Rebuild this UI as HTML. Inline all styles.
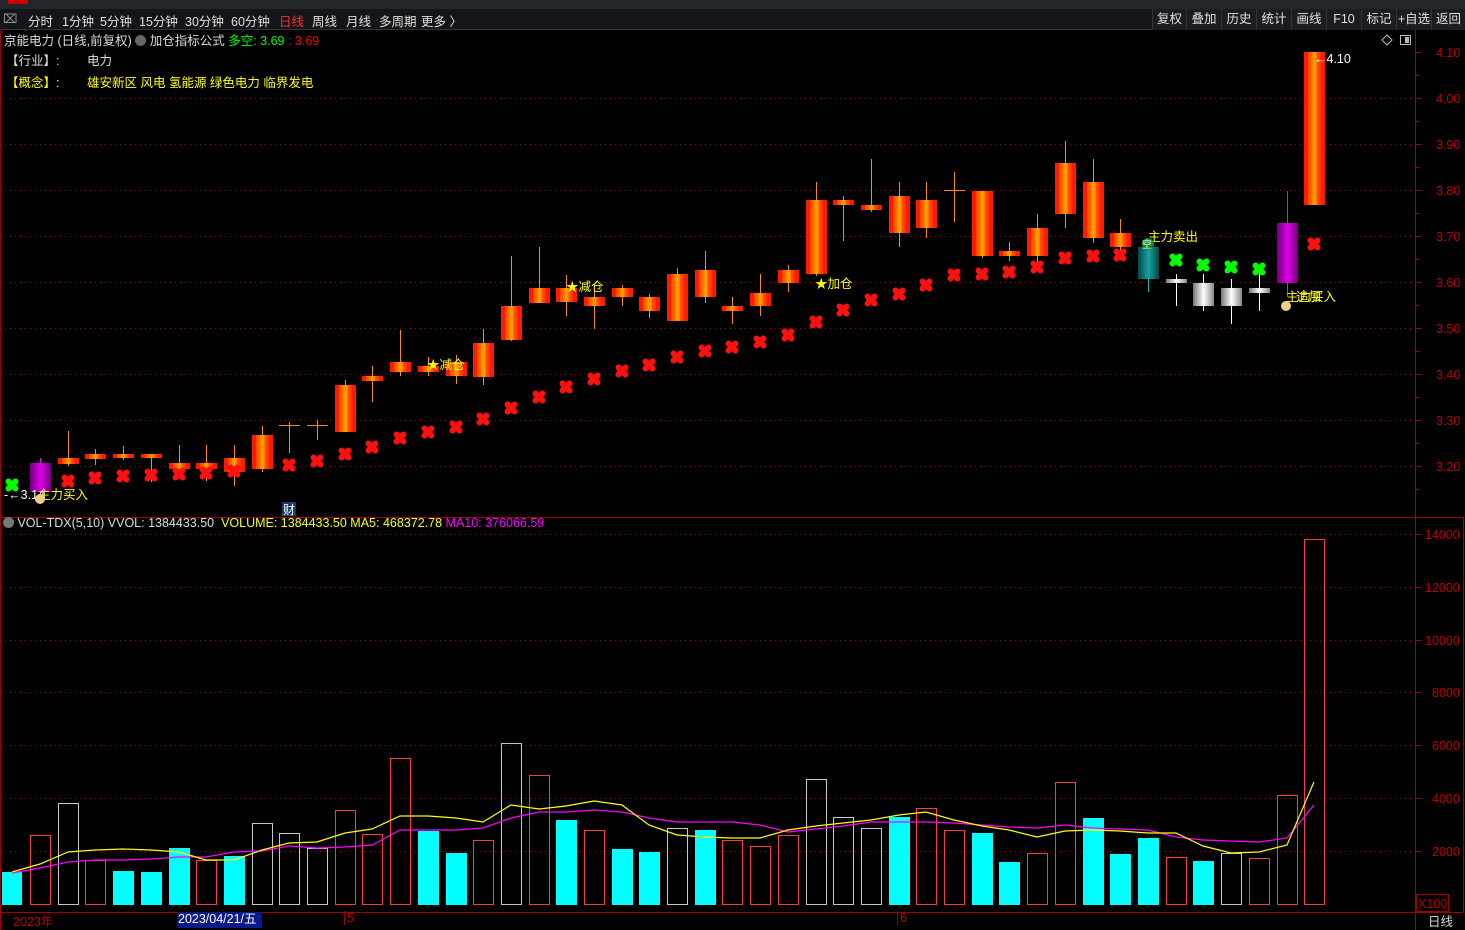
<!DOCTYPE html>
<html><head><meta charset="utf-8"><style>
*{margin:0;padding:0;box-sizing:border-box}
body{width:1465px;height:930px;background:#000;overflow:hidden;font-family:"Liberation Sans","Noto Sans CJK SC",sans-serif;font-size:12px;color:#ddd;position:relative}
.a{position:absolute;white-space:nowrap}
#top{position:absolute;left:0;top:0;width:1465px;height:9px;background:#23262b}
#top .r{position:absolute;left:8px;top:0;width:20px;height:4px;background:#c00}
#tabs{position:absolute;left:0;top:9px;width:1465px;height:21px;background:#141518;border-bottom:1px solid #333}
#tabs span{position:absolute;top:2px;font-size:12.5px;color:#e0e0e0}
.btn{position:absolute;top:9px;height:21px;background:#1c1d21;border-left:1px solid #333;font-size:12.5px;color:#e0e0e0;text-align:center;line-height:20px}
</style></head><body>
<div id="top"><div class="r"></div></div>
<div id="tabs">
<span style="left:3px;color:#999">⌧</span>
<span style="left:28px">分时</span><span style="left:62px">1分钟</span><span style="left:100px">5分钟</span><span style="left:139px">15分钟</span><span style="left:185px">30分钟</span><span style="left:231px">60分钟</span><span style="left:279px;color:#f33">日线</span><span style="left:312px">周线</span><span style="left:346px">月线</span><span style="left:379px">多周期</span><span style="left:421px">更多 〉</span>
</div>
<div class="btn" style="left:1152px;width:34px">复权</div><div class="btn" style="left:1186px;width:35px">叠加</div><div class="btn" style="left:1221px;width:35px">历史</div><div class="btn" style="left:1256px;width:35px">统计</div><div class="btn" style="left:1291px;width:35px">画线</div><div class="btn" style="left:1326px;width:35px">F10</div><div class="btn" style="left:1361px;width:35px">标记</div><div class="btn" style="left:1396px;width:35px">+自选</div><div class="btn" style="left:1431px;width:34px">返回</div>

<svg class="a" style="left:0;top:0" width="1465" height="930" id="s">
<defs>
<linearGradient id="gr" x1="0" x2="1"><stop offset="0" stop-color="#ff1a00"/><stop offset=".2" stop-color="#ff1a00"/><stop offset=".2" stop-color="#ff4a00"/><stop offset=".4" stop-color="#ff7000"/><stop offset=".4" stop-color="#ff9a00"/><stop offset=".6" stop-color="#ff9a00"/><stop offset=".6" stop-color="#ff5a00"/><stop offset=".8" stop-color="#ff3000"/><stop offset=".8" stop-color="#ff1a00"/><stop offset="1" stop-color="#ff1a00"/></linearGradient>
<linearGradient id="gp" x1="0" x2="1"><stop offset="0" stop-color="#70007a"/><stop offset=".5" stop-color="#e000e8"/><stop offset="1" stop-color="#70007a"/></linearGradient>
<linearGradient id="gw" x1="0" x2="1"><stop offset="0" stop-color="#777"/><stop offset=".5" stop-color="#fff"/><stop offset="1" stop-color="#888"/></linearGradient>
<linearGradient id="gt" x1="0" x2="1"><stop offset="0" stop-color="#004848"/><stop offset=".5" stop-color="#1aa0a0"/><stop offset="1" stop-color="#004848"/></linearGradient>
</defs>
<g id="grid" stroke="#a00000" stroke-dasharray="1,4" stroke-width="1"></g>
<line x1="0" y1="517.5" x2="1463" y2="517.5" stroke="#a00000"/>
<line x1="1415.5" y1="30" x2="1415.5" y2="930" stroke="#a00000"/>
<line x1="0" y1="912.5" x2="1463" y2="912.5" stroke="#a00000"/>
<line x1="1463.5" y1="517" x2="1463.5" y2="912" stroke="#a00000"/>
<line x1="0.5" y1="30" x2="0.5" y2="930" stroke="#a00000"/>
<g id="g"></g>
<g font-size="12.5" fill="#c00000" id="ax"></g>
<rect x="1416.5" y="894.5" width="32" height="17" fill="none" stroke="#a00000"/>
<text x="1418" y="908" font-size="12.5" fill="#c00000">X100</text>
<g font-size="12.5" fill="#ff0">
<text x="427" y="369">★减仓</text><text x="566" y="291">★减仓</text><text x="815" y="288">★加仓</text><text x="1148" y="241">主力卖出</text><text x="38" y="499">主力买入</text><text x="1286" y="301">主力买入</text><text x="1296" y="301">追加</text>
</g>
<text x="4" y="499" font-size="12.5" fill="#fff">-←3.14</text>
<text x="1314" y="63" font-size="12.5" fill="#fff">←4.10</text>
<circle cx="1148" cy="244" r="6" fill="#0a8a2a"/><text x="1142" y="248" font-size="10" fill="#fff">空</text>
<circle cx="1286" cy="306" r="5" fill="#f0d080"/>
<circle cx="40" cy="499" r="5" fill="#f0d080"/>
<rect x="282" y="502" width="14" height="14" fill="#1a3a6a"/><text x="283" y="514" font-size="12" fill="#fff">财</text>
<path d="M1382 40l5-5 5 5-5 5z" fill="none" stroke="#bbb"/><rect x="1400.5" y="35.5" width="10" height="9" fill="none" stroke="#bbb"/><rect x="1405" y="37" width="4" height="6" fill="#bbb"/>
</svg>

<div class="a" style="left:4px;top:30px;font-size:12.5px;color:#ddd">京能电力 (日线,前复权) <span style="display:inline-block;width:11px;height:11px;border-radius:50%;background:#666;vertical-align:-1px"></span> 加仓指标公式 <span style="color:#0f0">多空: 3.69</span> <span style="color:#f00">: 3.69</span></div>
<div class="a" style="left:6px;top:50px;font-size:12.5px;color:#ddd">【行业】:</div>
<div class="a" style="left:87px;top:50px;font-size:12.5px;color:#ddd">电力</div>
<div class="a" style="left:6px;top:72px;font-size:12.5px;color:#ff0">【概念】:</div>
<div class="a" style="left:87px;top:72px;font-size:12.5px;color:#ff0">雄安新区 风电 氢能源 绿色电力 临界发电</div>
<div class="a" style="left:3px;top:516px;font-size:12.5px;color:#ddd"><span style="display:inline-block;width:11px;height:11px;border-radius:50%;background:#777;vertical-align:-1px"></span> VOL-TDX(5,10) VVOL: 1384433.50 &nbsp;<span style="color:#ff0">VOLUME: 1384433.50 MA5: 468372.78</span> <span style="color:#f0f">MA10: 376066.59</span></div>
<div class="a" style="left:13px;top:911px;font-size:12.5px;color:#c00000">2023年</div>
<div class="a" style="left:177px;top:912px;height:16px;width:85px;background:#0a1a8a;font-size:12.5px;color:#fff;line-height:15px;padding-left:1px">2023/04/21/五</div>
<div class="a" style="left:344px;top:911px;font-size:12.5px;color:#c00000;border-left:1px solid #a00000;padding-left:2px">5</div>
<div class="a" style="left:897px;top:911px;font-size:12.5px;color:#c00000;border-left:1px solid #a00000;padding-left:2px">6</div>
<div class="a" style="left:1428px;top:911px;font-size:12.5px;color:#ddd">日线</div>

<script>
var NS="http://www.w3.org/2000/svg";
function el(p,t,a){var e=document.createElementNS(NS,t);for(var k in a)e.setAttribute(k,a[k]);p.appendChild(e);return e;}
var G=document.getElementById('g'),GR=document.getElementById('grid'),AX=document.getElementById('ax');
function X(i){return Math.round(12.3+27.7*i);}
var pl=["4.10","4.00","3.90","3.80","3.70","3.60","3.50","3.40","3.30","3.20"];
pl.forEach(function(t,k){var y=52+46*k;if(k>0)el(GR,'line',{x1:0,y1:y+.5,x2:1415,y2:y+.5});
el(G,'line',{x1:1415,y1:y+.5,x2:1421,y2:y+.5,stroke:'#a00000'});el(G,'line',{x1:1415,y1:y+23.5,x2:1419,y2:y+23.5,stroke:'#a00000'});
var tx=el(AX,'text',{x:1436,y:y+5});tx.textContent=t;});
var vl=["14000","12000","10000","8000","6000","4000","2000"];
vl.forEach(function(t,k){var y=Math.round(534+52.8*k);el(GR,'line',{x1:0,y1:y+.5,x2:1415,y2:y+.5});
el(G,'line',{x1:1415,y1:y+.5,x2:1421,y2:y+.5,stroke:'#a00000'});
var tx=el(AX,'text',{x:t.length==5?1425:1432,y:y+5});tx.textContent=t;});
var V=[[872,'c'],[835,'r'],[803,'g'],[860,'r'],[871,'c'],[872,'c'],[848,'c'],[860,'r'],[856,'c'],[823,'g'],[833,'g'],[848,'g'],[810,'r'],[834,'r'],[758,'r'],[831,'c'],[853,'c'],[840,'r'],[743,'g'],[775,'r'],[820,'c'],[830,'r'],[849,'c'],[852,'c'],[828,'g'],[830,'c'],[840,'r'],[846,'r'],[835,'r'],[779,'g'],[817,'g'],[828,'g'],[817,'c'],[808,'r'],[830,'r'],[833,'c'],[862,'c'],[853,'r'],[782,'r'],[818,'c'],[854,'c'],[838,'c'],[857,'r'],[861,'c'],[853,'g'],[858,'r'],[795,'r'],[539,'r']];
V.forEach(function(v,i){var x=X(i)-10;if(i==0)x=2;
if(v[1]=='c')el(G,'rect',{x:x,y:v[0],width:i==0?20:21,height:905-v[0],fill:'#00ffff'});
else el(G,'rect',{x:x+.5,y:v[0]+.5,width:20,height:904-v[0],fill:'none',stroke:v[1]=='r'?'#ff3c3c':'#c8c8c8'});});
var Y=[872,864,852,850,849,850,852,860,860,850,843,842,833,829,816,816,818,822,805,809,806,801,805,825,835,837,838,838,830,826,823,820,815,812,820,826,830,837,831,830,831,833,833,846,853,852,845,782];
var M=[873,868,862,860,860,859,857,857,852,851,846,848,847,845,830,830,830,828,818,812,812,810,812,818,822,822,822,825,832,829,826,822,822,822,823,825,827,828,825,828,829,830,837,840,841,842,838,805];
function pts(a){return a.map(function(y,i){return X(i)+','+y}).join(' ');}
el(G,'polyline',{points:pts(M),fill:'none',stroke:'#ff00ff','stroke-width':1.2});
el(G,'polyline',{points:pts(Y),fill:'none',stroke:'#ffff00','stroke-width':1.2});
var C=[null,[463,492,458,494,'p'],[458,464,431,466,'r'],[454,459,449,465,'r'],[454,458,446,460,'r'],[454,458,454,482,'r'],[463,469,445,476,'r'],[463,469,445,481,'r'],[458,472,445,486,'r'],[435,469,426,472,'r'],[425,427,422,453,'d'],[425,427,420,440,'d'],[385,432,380,432,'r'],[376,381,366,402,'r'],[362,372,330,376,'r'],[366,372,357,376,'r'],[362,376,355,384,'r'],[343,377,329,385,'r'],[306,340,256,341,'r'],[288,303,247,303,'r'],[288,302,275,316,'r'],[297,306,286,329,'r'],[288,297,285,306,'r'],[297,311,294,318,'r'],[274,321,268,321,'r'],[270,297,251,303,'r'],[306,311,297,324,'r'],[293,306,274,316,'r'],[270,283,265,292,'r'],[200,274,182,276,'r'],[200,205,196,241,'r'],[205,210,159,212,'r'],[196,233,182,247,'r'],[200,228,182,238,'r'],[190,191,172,222,'d'],[191,256,191,258,'r'],[251,256,242,261,'r'],[228,256,214,270,'r'],[163,214,141,228,'r'],[182,238,159,243,'r'],[233,247,219,260,'r'],[247,279,242,292,'t'],[279,283,274,306,'w'],[283,306,274,311,'w'],[288,306,279,324,'w'],[288,293,265,311,'w'],[223,283,191,297,'p'],[52,205,52,205,'r']];
var F={r:'url(#gr)',p:'url(#gp)',w:'url(#gw)',t:'url(#gt)'},WC={r:'#ff8c00',p:'#ff00ff',w:'#fff',t:'#00c0c0',d:'#ff8c00'};
C.forEach(function(c,i){if(!c)return;var x=X(i);
el(G,'line',{x1:x+.5,y1:c[2],x2:x+.5,y2:c[3],stroke:WC[c[4]]});
if(c[4]=='d'){el(G,'line',{x1:x-10,y1:c[0]+.5,x2:x+11,y2:c[0]+.5,stroke:'#ff8c00'});return;}
el(G,'rect',{x:x-10,y:c[0],width:21,height:Math.max(2,c[1]-c[0]),fill:F[c[4]]});});
function mk(x,y,col){el(G,'path',{d:'M'+(x-3.5)+' '+(y-3.5)+'L'+(x+3.5)+' '+(y+3.5)+'M'+(x+3.5)+' '+(y-3.5)+'L'+(x-3.5)+' '+(y+3.5),stroke:col,'stroke-width':6,'stroke-linecap':'round'});}
var R=[[2,481],[3,478],[4,476],[5,475],[6,474],[7,473],[8,471],[10,465],[11,461],[12,454],[13,447],[14,438],[15,432],[16,427],[17,419],[18,408],[19,397],[20,387],[21,379],[22,371],[23,365],[24,357],[25,351],[26,347],[27,342],[28,335],[29,322],[30,310],[31,300],[32,294],[33,285],[34,275],[35,274],[36,272],[37,267],[38,258],[39,256],[40,255],[47,244]];
R.forEach(function(r){mk(X(r[0]),r[1],'#ff1010');});
[[0,485],[42,260],[43,265],[44,267],[45,269]].forEach(function(r){mk(X(r[0]),r[1],'#00ff00');});
</script>
</body></html>
